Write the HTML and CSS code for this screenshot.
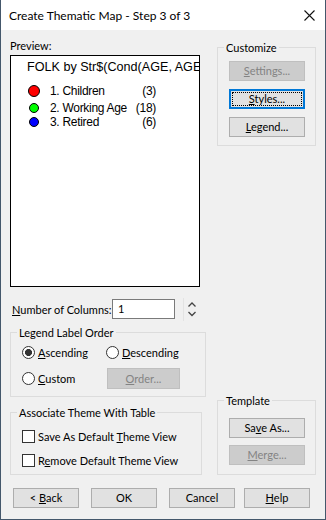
FILE: index.html
```html
<!DOCTYPE html>
<html lang="en">
<head>
  <meta charset="UTF-8">
  <meta name="viewport" content="width=device-width, initial-scale=1.0">
  <title>Create Thematic Map - Step 3 of 3</title>
  <link rel="stylesheet" href="styles.css">
</head>
<body>
  <div class="window">
    <div class="titlebar">
      <span class="title">Create Thematic Map - Step 3 of 3</span>
      <svg class="close" width="11" height="11" viewBox="0 0 11 11">
        <path d="M0.5 0.5L10.5 10.5M10.5 0.5L0.5 10.5" stroke="#111" stroke-width="1.1" fill="none"/>
      </svg>
    </div>

    <div class="content">
      <div class="left">
        <div class="label">Preview:</div>
        <div class="preview">
          <div class="preview-title">FOLK by Str$(Cond(AGE, AGE&lt;18, "Children", AGE&lt;65, "Working Age", "Retired"))</div>
          <div class="legend-list">
            <span class="dot big red"></span><span class="name">1. Children</span><span class="count">(3)</span>
            <span class="dot green"></span><span class="name">2. Working Age</span><span class="count">(18)</span>
            <span class="dot blue"></span><span class="name">3. Retired</span><span class="count">(6)</span>
          </div>
        </div>

        <div class="columns-row">
          <label class="columns-label"><u>N</u>umber of Columns:</label>
          <div class="num-input">1</div>
          <span class="spin-sep"></span>
          <svg class="spinner" width="10" height="18" viewBox="0 0 10 18">
            <path d="M1.5 6.5L5 3L8.5 6.5M1.5 12L5 15.5L8.5 12" stroke="#444" stroke-width="1.3" fill="none"/>
          </svg>
        </div>

        <fieldset class="group order-group">
          <legend>Legend Label Order</legend>
          <div class="order-body">
            <div class="radio"><span class="circle on"></span><span><u>A</u>scending</span></div>
            <div class="radio"><span class="circle"></span><span><u>D</u>escending</span></div>
            <div class="radio"><span class="circle"></span><span><u>C</u>ustom</span></div>
            <button class="btn order-btn" disabled><u>O</u>rder...</button>
          </div>
        </fieldset>

        <fieldset class="group assoc-group">
          <legend>Associate Theme With Table</legend>
          <div class="assoc-body">
            <div class="check"><span class="box"></span><span>Save As Default <u>T</u>heme View</span></div>
            <div class="check"><span class="box"></span><span>R<u>e</u>move Default Theme View</span></div>
          </div>
        </fieldset>
      </div>

      <div class="right">
        <fieldset class="group side-group">
          <legend>Customize</legend>
          <div class="side-body">
            <button class="btn" disabled><u>S</u>ettings...</button>
            <button class="btn focus"><u>S</u>tyles...</button>
            <button class="btn"><u>L</u>egend...</button>
          </div>
        </fieldset>

        <fieldset class="group side-group">
          <legend>Template</legend>
          <div class="side-body template-body">
            <button class="btn">Sa<u>v</u>e As...</button>
            <button class="btn" disabled><u>M</u>erge...</button>
          </div>
        </fieldset>
      </div>
    </div>

    <div class="footer">
      <button class="btn wide">&lt; <u>B</u>ack</button>
      <button class="btn wide">OK</button>
      <button class="btn wide">Cancel</button>
      <button class="btn wide help"><u>H</u>elp</button>
    </div>
  </div>
</body>
</html>
```

FILE: styles.css
```css
* {
  box-sizing: border-box;
}
body {
  margin: 0;
  background: #fff;
  font-family: Lato, "Noto Sans", sans-serif;
  font-size: 11px;
  color: #000;
}
.window {
  width: 326px;
  height: 520px;
  background: #f0f0f0;
  border: 1px solid #44576b;
  border-top: none;
  display: flex;
  flex-direction: column;
}
.titlebar {
  height: 30px;
  background: #fff;
  display: flex;
  align-items: center;
  justify-content: space-between;
  padding: 1px 10px 0 8px;
  font-size: 12px;
}
.close {
  display: block;
}
.content {
  display: flex;
  gap: 11px;
  padding: 8px 9px 0 9px;
}
.left {
  width: 196px;
  display: flex;
  flex-direction: column;
}
.right {
  width: 99px;
  display: flex;
  flex-direction: column;
  justify-content: space-between;
  padding-top: 2px;
}
.label {
  line-height: 15px;
  margin-bottom: 2px;
}

/* preview box */
.preview {
  width: 190px;
  height: 232px;
  background: #fff;
  border: 1px solid #000;
  padding: 4px 0 0 16px;
  overflow: hidden;
  font-family: "Liberation Sans", Arial, sans-serif;
  font-size: 12px;
  letter-spacing: -0.3px;
}
.preview-title {
  white-space: nowrap;
  line-height: 15px;
  margin-bottom: 7px;
  font-size: 12.6px;
  letter-spacing: 0;
}
.legend-list {
  display: grid;
  grid-template-columns: 14px 91px 24px;
  grid-template-rows: 18px 15px 14px;
  align-items: center;
}
.dot {
  width: 10px;
  height: 10px;
  border-radius: 50%;
  border: 1px solid #000;
  justify-self: center;
}
.dot.big {
  width: 12px;
  height: 12px;
}
.red { background: #ff0000; }
.green { background: #00ff00; }
.blue { background: #0000ff; }
.name {
  padding-left: 9px;
  white-space: nowrap;
}
.count {
  text-align: right;
}

/* number of columns */
.columns-row {
  display: flex;
  align-items: center;
  height: 20px;
  margin-top: 12px;
}
.columns-label {
  width: 100px;
  margin-left: 2px;
}
.num-input {
  width: 63px;
  height: 20px;
  background: #fff;
  border: 1px solid #7a7a7a;
  padding-left: 5px;
  line-height: 18px;
}
.spin-sep {
  width: 1px;
  height: 23px;
  background: #e3e3e3;
  margin-left: 8px;
}
.spinner {
  margin-left: 3px;
  display: block;
}

/* group boxes */
.group {
  margin: 0;
  padding: 0;
  border: 1px solid #dcdcdc;
  min-width: 0;
}
.group legend {
  margin-left: 6px;
  padding: 0 2px;
  line-height: 15px;
}
.order-group {
  width: 196px;
  margin-top: 6px;
}
.order-body {
  display: grid;
  grid-template-columns: 84px auto;
  grid-template-rows: 16px 21px;
  row-gap: 8px;
  align-items: center;
  padding: 4px 0 7px 11px;
}
.assoc-group {
  width: 192px;
  margin-top: 8px;
}
.assoc-body {
  display: flex;
  flex-direction: column;
  gap: 8px;
  padding: 8px 0 6px 11px;
}
.radio, .check {
  display: flex;
  align-items: center;
  gap: 3px;
  height: 16px;
  white-space: nowrap;
}
.circle {
  width: 13px;
  height: 13px;
  border-radius: 50%;
  border: 1px solid #333;
  background: #fff;
}
.circle.on {
  background: radial-gradient(circle, #333 0, #333 3.2px, #fff 3.8px);
}
.box {
  width: 13px;
  height: 13px;
  border: 1px solid #333;
  background: #fff;
}

/* side groups */
.side-group {
  width: 99px;
}
.side-body {
  display: flex;
  flex-direction: column;
  gap: 8px;
  padding: 6px 0 8px 11px;
}
.template-body {
  gap: 7px;
  padding: 10px 0 9px 11px;
}

/* buttons */
.btn {
  display: block;
  width: 76px;
  height: 20px;
  padding: 0;
  margin: 0;
  background: #e1e1e1;
  border: 1px solid #adadad;
  font: inherit;
  line-height: 18px;
  text-align: center;
  white-space: nowrap;
  color: #000;
}
.btn:disabled {
  background: #cccccc;
  border-color: #bfbfbf;
  color: #838383;
}
.btn.focus {
  border-color: #0078d7;
  box-shadow: inset 0 0 0 1px #0078d7;
  outline: 1px dotted #000;
  outline-offset: -4px;
}
.order-btn {
  width: 73px;
  height: 21px;
  line-height: 19px;
  margin-left: 1px;
}
.footer {
  display: flex;
  gap: 12px;
  padding-left: 12px;
  margin-top: 13px;
}
.btn.wide {
  width: 66px;
}
.help {
  margin-left: -3px;
}
```
